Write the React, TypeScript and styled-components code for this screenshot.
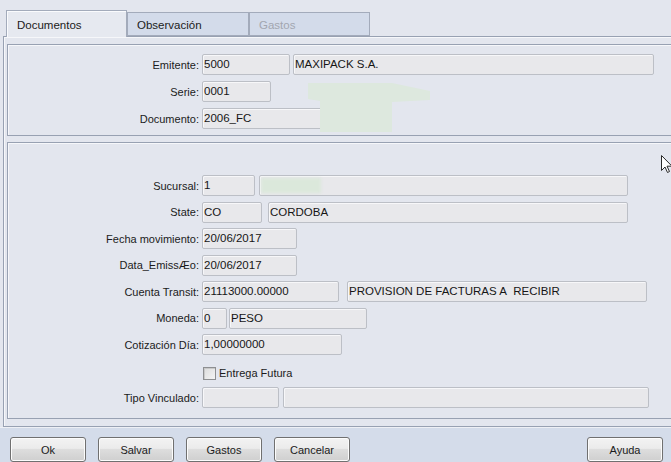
import React from "react";
import styled, { createGlobalStyle } from "styled-components";

const Global = createGlobalStyle`
  html, body {
    margin: 0;
    padding: 0;
    background: #e3e6ee;
    overflow: hidden;
  }
  body {
    font-family: "Liberation Sans", Arial, sans-serif;
    font-size: 11px;
    color: #1b1b1b;
  }
`;

const Window = styled.div`
  position: relative;
  width: 671px;
  height: 462px;
  display: flex;
  flex-direction: column;
  background: #e3e6ee;
  overflow: hidden;
`;

const TabStrip = styled.div`
  flex-shrink: 0;
  display: flex;
  align-items: flex-end;
  height: 36px;
  padding-left: 6px;
  box-sizing: border-box;
`;

const Tab = styled.div<{ $active?: boolean; $disabled?: boolean; $w: number }>`
  position: relative;
  z-index: ${(p) => (p.$active ? 2 : 1)};
  width: ${(p) => p.$w}px;
  height: ${(p) => (p.$active ? 27 : 24)}px;
  margin-bottom: ${(p) => (p.$active ? -1 : 0)}px;
  box-sizing: border-box;
  border: 1px solid #a3abbb;
  border-bottom: ${(p) => (p.$active ? "none" : "1px solid #a3abbb")};
  background: ${(p) => (p.$active ? "#e6e9f0" : "#d3dbea")};
  box-shadow: ${(p) => (p.$active ? "inset 1px 1px 0 #fafbfd" : "none")};
  color: ${(p) => (p.$disabled ? "#a2a6b0" : "#1b1b1b")};
  font-size: 11.5px;
  padding: ${(p) => (p.$active ? "8px 0 0 10px" : "6px 0 0 9px")};
`;

const TabBody = styled.div`
  flex: 1;
  min-height: 0;
  margin-left: 3px;
  margin-right: -20px;
  border: 1px solid #98a1b2;
  border-right: none;
  box-shadow: inset 1px 1px 0 #f6f7fa;
  padding: 7px 0 5px 3px;
  display: flex;
  flex-direction: column;
  gap: 6px;
`;

const Panel = styled.div<{ $top: number; $bottom: number }>`
  position: relative;
  flex-shrink: 0;
  border: 1px solid #98a1b2;
  border-right: none;
  box-shadow: inset 1px 1px 0 #f6f7fa;
  padding: ${(p) => p.$top}px 0 ${(p) => p.$bottom}px 1px;
  display: flex;
  flex-direction: column;
  gap: ${(p) => (p.$top > 20 ? 5.5 : 6)}px;
`;

const Row = styled.div`
  display: flex;
  align-items: center;
  height: 21px;
  flex-shrink: 0;
`;

const Label = styled.div`
  width: 190px;
  margin-right: 3px;
  text-align: right;
  white-space: nowrap;
  color: #1b1b1b;
`;

const Field = styled.div<{ $w: number; $gap?: number }>`
  position: relative;
  width: ${(p) => p.$w}px;
  height: 21px;
  margin-left: ${(p) => p.$gap ?? 0}px;
  box-sizing: border-box;
  border: 1px solid #bcbfc6;
  border-radius: 2px;
  background: #e8e8eb;
  box-shadow: inset 1px 1px 0 #f7f7f9;
  padding: 3px 0 0 1px;
  font-size: 11.5px;
  color: #161616;
  white-space: nowrap;
  overflow: hidden;
`;

const Smudge = styled.span`
  position: absolute;
  left: 1px;
  top: 2px;
  width: 60px;
  height: 15px;
  background: #dbe8db;
  filter: blur(1.5px);
`;

const CheckRow = styled.label`
  display: flex;
  align-items: center;
  box-sizing: border-box;
  height: 21px;
  flex-shrink: 0;
  padding-left: 194px;
  padding-top: 4px;
  gap: 3px;
`;

const CheckBox = styled.span`
  width: 13px;
  height: 13px;
  box-sizing: border-box;
  border: 1px solid #8e8f91;
  background: linear-gradient(135deg, #dcdcdc 0%, #f4f4f4 100%);
  box-shadow: inset 1px 1px 0 #c9c9c9;
`;

const ButtonBar = styled.div`
  flex-shrink: 0;
  height: 35px;
  border-top: 1px solid #eef0f5;
  background: #d4dcea;
  display: flex;
  align-items: flex-start;
  padding: 9px 8px 0 10px;
  gap: 12px;
  box-sizing: border-box;
`;

const Button = styled.button<{ $push?: boolean }>`
  width: 76px;
  height: 25px;
  margin-left: ${(p) => (p.$push ? "auto" : "0")};
  border: 1px solid #707070;
  border-radius: 3px;
  background: linear-gradient(#f3f3f3 0%, #ebebeb 45%, #dddddd 50%, #cfcfcf 100%);
  box-shadow: inset 0 0 0 1px #fcfcfc;
  font-family: "Liberation Sans", Arial, sans-serif;
  font-size: 11px;
  color: #1b1b1b;
  padding: 0;
`;

const Blot = styled.svg`
  position: absolute;
  left: 292px;
  top: 30px;
  pointer-events: none;
`;

const Pointer = styled.svg`
  position: absolute;
  left: 661px;
  top: 155px;
`;

type FieldSpec = { w: number; gap?: number; text?: string; smudge?: boolean };
type RowSpec = { label: string; fields: FieldSpec[] };

const header: RowSpec[] = [
  { label: "Emitente:", fields: [{ w: 88, text: "5000" }, { w: 361, gap: 3, text: "MAXIPACK S.A." }] },
  { label: "Serie:", fields: [{ w: 69, text: "0001" }] },
  { label: "Documento:", fields: [{ w: 190, text: "2006_FC" }] },
];

const detail: RowSpec[] = [
  { label: "Sucursal:", fields: [{ w: 53, text: "1" }, { w: 369, gap: 4, smudge: true }] },
  { label: "State:", fields: [{ w: 60, text: "CO" }, { w: 360, gap: 6, text: "CORDOBA" }] },
  { label: "Fecha movimiento:", fields: [{ w: 95, text: "20/06/2017" }] },
  { label: "Data_EmissÆo:", fields: [{ w: 95, text: "20/06/2017" }] },
  {
    label: "Cuenta Transit:",
    fields: [{ w: 137, text: "21113000.00000" }, { w: 300, gap: 8, text: "PROVISION DE FACTURAS A\u00a0 RECIBIR" }],
  },
  { label: "Moneda:", fields: [{ w: 25, text: "0" }, { w: 138, gap: 2, text: "PESO" }] },
  { label: "Cotización Día:", fields: [{ w: 140, text: "1,00000000" }] },
];

const FormRow = ({ row }: { row: RowSpec }) => (
  <Row>
    <Label>{row.label}</Label>
    {row.fields.map((f, i) => (
      <Field key={i} $w={f.w} $gap={f.gap}>
        {f.smudge && <Smudge />}
        {f.text}
      </Field>
    ))}
  </Row>
);

export default function App() {
  return (
    <>
      <Global />
      <Window>
        <TabStrip>
          <Tab $active $w={121}>Documentos</Tab>
          <Tab $w={122}>Observación</Tab>
          <Tab $w={121} $disabled>Gastos</Tab>
        </TabStrip>
        <TabBody>
          <Panel $top={9} $bottom={6}>
            {header.map((r) => (
              <FormRow key={r.label} row={r} />
            ))}
            <Blot width="132" height="58" viewBox="0 0 132 58">
              <polygon
                points="8,8 92,8 130,16 130,25 92,27 92,57 20,57 20,26 8,24"
                fill="#dde8de"
              />
            </Blot>
          </Panel>
          <Panel $top={32} $bottom={10}>
            {detail.map((r) => (
              <FormRow key={r.label} row={r} />
            ))}
            <CheckRow>
              <CheckBox />
              <span>Entrega Futura</span>
            </CheckRow>
            <Row>
              <Label>Tipo Vinculado:</Label>
              <Field $w={77} />
              <Field $w={366} $gap={4} />
            </Row>
          </Panel>
        </TabBody>
        <ButtonBar>
          <Button>Ok</Button>
          <Button>Salvar</Button>
          <Button>Gastos</Button>
          <Button>Cancelar</Button>
          <Button $push>Ayuda</Button>
        </ButtonBar>
        <Pointer width="12" height="19" viewBox="0 0 12 19">
          <path d="M0.5 0.5 L0.5 15.5 L4 12 L6.5 17.5 L8.5 16.5 L6 11.2 L11 11.2 Z" fill="#ffffff" stroke="#2a2a2a" strokeWidth="1" />
        </Pointer>
      </Window>
    </>
  );
}
